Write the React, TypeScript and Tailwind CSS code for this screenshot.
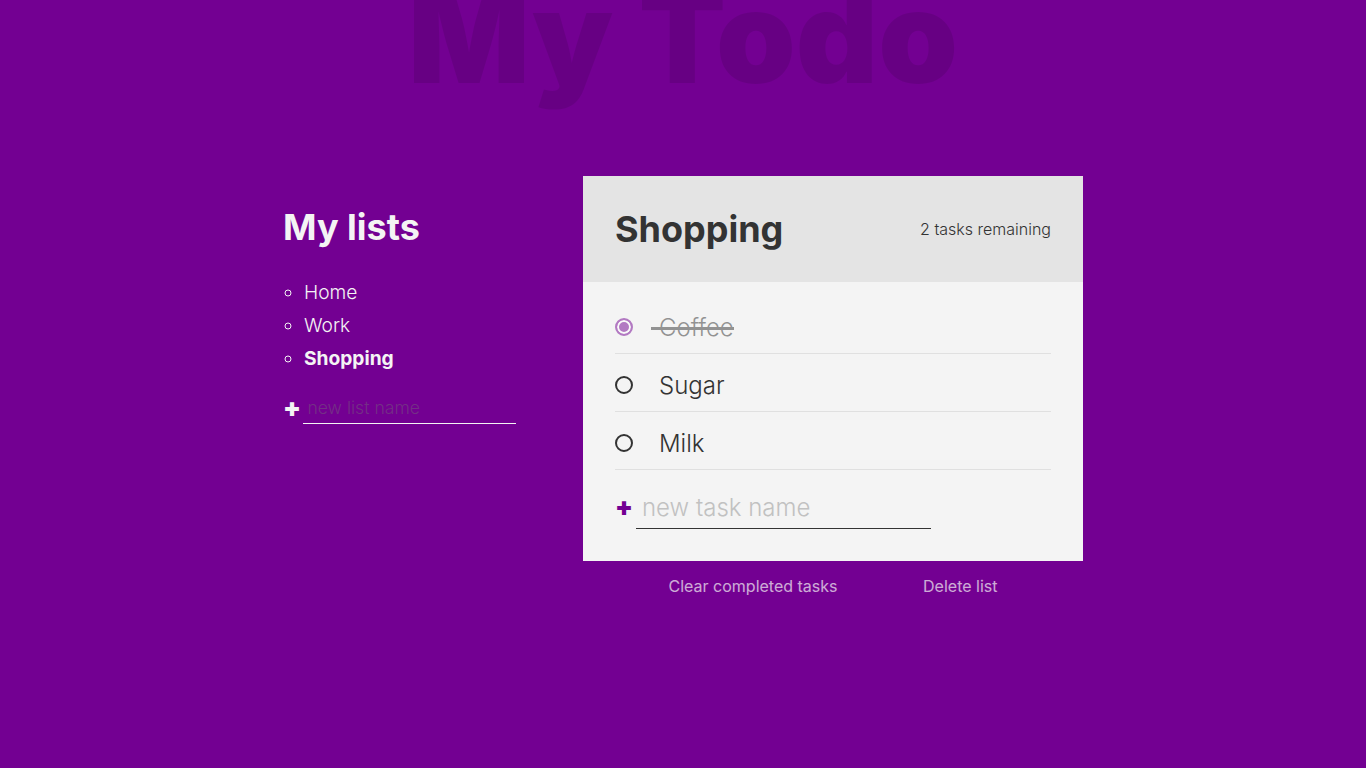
import { useState } from 'react';

type Task = { id: number; name: string; done: boolean };

const lists = ['Home', 'Work', 'Shopping'];

export default function App() {
  const [tasks, setTasks] = useState<Task[]>([
    { id: 1, name: 'Coffee', done: true },
    { id: 2, name: 'Sugar', done: false },
    { id: 3, name: 'Milk', done: false },
  ]);
  const remaining = tasks.filter((t) => !t.done).length;

  const toggle = (id: number) =>
    setTasks((prev) => prev.map((t) => (t.id === id ? { ...t, done: !t.done } : t)));

  return (
    <div className="min-h-screen overflow-hidden bg-[#730092] text-[#f4f4f4] font-['Inter',sans-serif] font-light text-2xl grid grid-cols-[1fr_300px_500px_1fr] content-start">
      <h1 className="col-span-4 text-center text-[127.6px] leading-[150px] font-black tracking-normal text-black/10 -mt-[38px] mb-[64px]">
        My Todo
      </h1>

      {/* lists column */}
      <div className="col-start-2">
        <h2 className="mt-[30px] text-[36px] leading-[42px] font-bold">My lists</h2>
        <ul className="mt-[28px] list-[circle] pl-[21px] text-[19.2px] leading-[33px]">
          {lists.map((name) => (
            <li key={name} className={name === 'Shopping' ? 'font-bold' : ''}>
              {name}
            </li>
          ))}
        </ul>
        <form className="mt-[19px] flex items-center" onSubmit={(e) => e.preventDefault()}>
          <button type="button" className="w-[14px] text-[26px] font-black leading-none mr-[6px] -mt-[2px]">+</button>
          <input
            placeholder="new list name"
            className="w-[213px] bg-transparent border-b border-[#f4f4f4] text-[17.6px] leading-[20px] p-[4.4px] outline-none placeholder:text-[#742f86]"
          />
        </form>
      </div>

      {/* active list */}
      <div className="col-start-3 bg-[#f4f4f4] text-[#333]">
        <div className="bg-[#e4e4e4] p-8 flex items-center justify-between">
          <h2 className="text-[36px] leading-[42px] font-bold mr-9">Shopping</h2>
          <p className="text-base">{remaining} tasks remaining</p>
        </div>
        <div className="relative p-8">
          <div className="flex flex-col gap-[30px]">
            {tasks.map((t) => (
              <div key={t.id} className="relative h-7 leading-7 after:content-[''] after:absolute after:left-0 after:right-0 after:-bottom-3 after:h-px after:bg-[#333] after:opacity-10">
                <label
                  onClick={() => toggle(t.id)}
                  className={`relative inline-flex items-center h-7 cursor-pointer ${t.done ? 'opacity-50' : ''}`}
                >
                  <span
                    className={`w-[18px] h-[18px] rounded-full border-2 mr-[26px] -mt-[2px] ${
                      t.done ? 'bg-[#730092] border-[#730092] shadow-[inset_0_0_0_2px_white]' : 'border-[#333]'
                    }`}
                  />
                  {t.name}
                  {t.done && <span className="absolute left-9 right-0 top-[13px] h-[3px] bg-[#333]" />}
                </label>
              </div>
            ))}
          </div>
          <form className="mt-[30px] flex items-center" onSubmit={(e) => e.preventDefault()}>
            <button type="button" className="w-[15px] text-[26px] font-black leading-none text-[#730092] mr-[6px] -mt-[3px]">+</button>
            <input
              placeholder="new task name"
              className="w-[295px] bg-transparent border-b border-[#333] text-2xl leading-7 p-[6px] outline-none placeholder:text-[#c1c1c1]"
            />
          </form>
          <div className="absolute left-0 w-full -bottom-[37px] flex justify-evenly text-[#f4f4f4]">
            <button type="button" className="text-base font-normal opacity-70">Clear completed tasks</button>
            <button type="button" className="text-base font-normal opacity-70">Delete list</button>
          </div>
        </div>
      </div>
    </div>
  );
}
